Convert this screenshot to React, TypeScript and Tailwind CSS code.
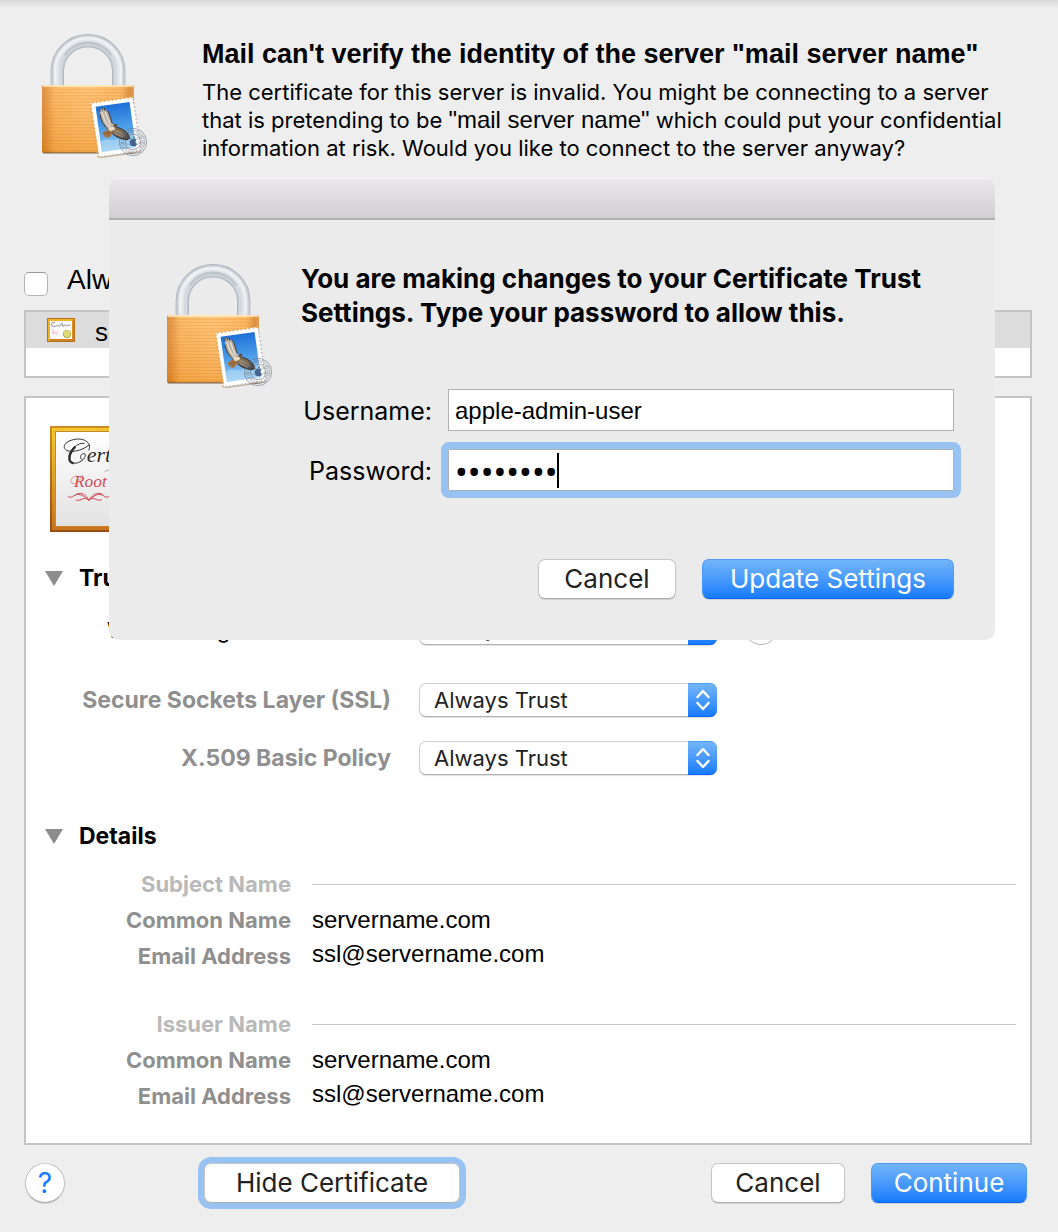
import { useState } from 'react';
import type { ReactNode } from 'react';

const stampHoles = {
    top: Array.from({ length: 11 }, (_, i) => 6 + i * 12),
    side: Array.from({ length: 14 }, (_, i) => 6 + i * 12),
};

function LockIcon() {
    return (
        <svg viewBox="60 36 330 378" className="w-[110px] h-[126px] shrink-0" aria-hidden="true">
            <defs>
                <linearGradient id="lockBody" x1="0" x2="1" y1="0" y2="0">
                    <stop offset="0" stopColor="#d8832b" />
                    <stop offset="0.04" stopColor="#e08c34" />
                    <stop offset="0.14" stopColor="#fbb254" />
                    <stop offset="0.5" stopColor="#ffbd66" />
                    <stop offset="0.86" stopColor="#fbb050" />
                    <stop offset="0.96" stopColor="#d98228" />
                    <stop offset="1" stopColor="#e4964a" />
                </linearGradient>
                <linearGradient id="lockShade" x1="0" x2="0" y1="0" y2="1">
                    <stop offset="0" stopColor="#fff" stopOpacity="0.12" />
                    <stop offset="1" stopColor="#d06a00" stopOpacity="0.2" />
                </linearGradient>
                <linearGradient id="sky" x1="0" x2="0" y1="0" y2="1">
                    <stop offset="0" stopColor="#1f70d8" />
                    <stop offset="0.5" stopColor="#4b9de9" />
                    <stop offset="1" stopColor="#9bcdf2" />
                </linearGradient>
                <linearGradient id="lowerWing" x1="0" x2="1" y1="0" y2="1">
                    <stop offset="0" stopColor="#8a6f50" />
                    <stop offset="0.5" stopColor="#77695a" />
                    <stop offset="1" stopColor="#3b3835" />
                </linearGradient>
            </defs>
            <path d="M112 200V152a92 90 0 0 1 184 0v48" fill="none" stroke="#a2a9b2" strokeWidth="40" />
            <path d="M112 200V152a92 90 0 0 1 184 0v48" fill="none" stroke="#c3c9d0" strokeWidth="37" />
            <path d="M112 200V152a92 90 0 0 1 184 0v48" fill="none" stroke="#d5dadf" strokeWidth="28" />
            <path d="M109 200V150a95 93 0 0 1 190 0v50" fill="none" stroke="#e3e7eb" strokeWidth="14" />
            <path d="M106 190V150a98 95 0 0 1 196 0v40" fill="none" stroke="#f1f3f5" strokeWidth="6" />
            <path d="M134 106a82 78 0 0 1 140 0" fill="none" stroke="#a4acb6" strokeWidth="8" opacity="0.45" />
            <rect x="68" y="394" width="272" height="8" rx="4" fill="#5b5b5b" opacity="0.45" />
            <rect x="66" y="196" width="276" height="202" rx="4" fill="url(#lockBody)" />
            {Array.from({ length: 20 }, (_, i) => (
                <path key={i} d={`M67 ${208 + i * 9.6}H341`} stroke="#d97d22" strokeWidth="2.4" opacity="0.42" />
            ))}
            <rect x="66" y="196" width="276" height="202" rx="4" fill="url(#lockShade)" />
            <path d="M69 198H339" stroke="#fff0c8" strokeWidth="4" />
            <path d="M68 397H340" stroke="#8a4a12" strokeWidth="3" opacity="0.7" />

            <g transform="translate(212 249) rotate(-8)">
                <rect x="3" y="5" width="126" height="163" fill="#54310c" opacity="0.35" />
                <rect width="128" height="164" fill="#fff" transform="skewX(1)" />
                {stampHoles.top.map((x) => (
                    <g key={x} fill="#e4a861">
                        <circle cx={x} cy="0" r="3" />
                        <circle cx={x + 2} cy="164" r="3" fill="#cfc2b2" />
                    </g>
                ))}
                {stampHoles.side.map((y) => (
                    <g key={y} fill="#e4a861">
                        <circle cx="0" cy={y} r="3" />
                        <circle cx="129" cy={y} r="3" fill="#cbc5be" />
                    </g>
                ))}
                <rect x="13" y="13" width="103" height="137" fill="url(#sky)" />
                <path d="M13 120c22-14 40 8 60-4s30-10 43-8v42H13z" fill="#c4e2f6" opacity="0.45" />
            </g>

            {/* upper wing */}
            <path d="M236 266l6 3 2-7 5 5 5-3 3 7 5 0c9 13 11 27 15 39l7 11-16 11c-12-8-19-19-24-33-3-9-5-18-4-26z" fill="#b9b0a4" />
            <path d="M246 276c4 19 11 33 24 46M256 276c4 14 8 26 17 40" fill="none" stroke="#e4dccf" strokeWidth="4" />
            <path d="M240 284c3 18 13 36 26 46M262 271c8 12 10 27 15 40M236 266l6 8M245 262l3 8M253 264l2 8" fill="none" stroke="#3a332d" strokeWidth="3" />
            {/* lower wing */}
            <path d="M272 330l16-9c15 3 28 10 34 18 5 6 8 12 9 18l-10 2c-16-1-29-5-38-13l-13-8z" fill="url(#lowerWing)" />
            <path d="M284 332c12 2 22 8 30 17M282 338c10 4 18 9 27 13" fill="none" stroke="#b8a588" strokeWidth="3" />
            <path d="M278 341c13 12 29 18 46 18M290 322c16 3 30 12 38 28" fill="none" stroke="#2f2a26" strokeWidth="3" />
            {/* tail and head */}
            <path d="M246 342c7-9 15-13 24-14l8 10c-3 8-8 13-14 17l-6-5-5 1-1-5z" fill="#a5774a" />
            <path d="M254 341l17-6M260 348l12-10" stroke="#6d4a2a" strokeWidth="2" />
            <path d="M264 324c8-4 14-4 22-2l-3 8-13 4z" fill="#e9dcc6" />
            <path d="M280 320l3-7c4-3 8-1 10 2l-3 2-3 7z" fill="#6b4c2e" />

            <g fill="none" stroke="#5f6b7c" opacity="0.55">
                <circle cx="339" cy="366" r="41" strokeWidth="3" />
                <circle cx="339" cy="366" r="35" strokeWidth="2" />
                <circle cx="339" cy="366" r="23" strokeWidth="3" />
                <circle cx="339" cy="366" r="29" strokeWidth="6" strokeDasharray="3 5" />
                <path d="M301 352c22-8 30 10 52 2s16-4 24-3M299 372c20-8 30 10 50 2s20-4 28-2M303 386c18-8 28 8 46 0" strokeWidth="2" />
            </g>
            <path
                d="M340 358c4-3 8-2 10 1-5 4-4 10 1 12-2 7-6 9-11 7-6 2-11-4-11-12 1-8 7-10 11-8zM339 355c0-4 3-7 6-7 0 4-3 7-6 7z"
                fill="#34527b"
                opacity="0.85"
            />
        </svg>
    );
}

function SmallCertificateIcon() {
    return (
        <svg viewBox="0 0 84 72" className="w-7 h-6 shrink-0" aria-hidden="true">
            <rect width="84" height="72" fill="#b9711c" />
            <rect x="3" y="3" width="78" height="66" fill="#eeb429" />
            <path d="M3 69l8-6h65V10l5-7v66z" fill="#cd7f22" />
            <rect x="9" y="9" width="66" height="54" fill="#fafafa" />
            <path d="M24 15c-8-5-14 3-9 8s10 1 13 0 3 4 6 0 3 4 6 0 3-8 6-6-3 8 2 8 4-6 7-4 3 5 6 1 4 2 9 0" fill="none" stroke="#555" strokeWidth="2" />
            <path d="M13 37c8-8 11 2 3 6 9-2 8 4 18-5M15 48c9-7 10 5 20-1" fill="none" stroke="#f0a3a7" strokeWidth="2" />
            <circle cx="60" cy="48" r="12" fill="#9fa23f" />
            <circle cx="60" cy="47" r="10" fill="#dfdc77" />
        </svg>
    );
}

function CertificateIcon() {
    return (
        <svg viewBox="0 0 420 318" className="w-[140px] h-[106px]" aria-hidden="true">
            <defs>
                <linearGradient id="frame" x1="0" x2="0" y1="0" y2="1">
                    <stop offset="0" stopColor="#f2c72e" />
                    <stop offset="0.5" stopColor="#dda028" />
                    <stop offset="1" stopColor="#c8751d" />
                </linearGradient>
                <linearGradient id="frameEdge" x1="0" x2="0" y1="0" y2="1">
                    <stop offset="0" stopColor="#d08a20" />
                    <stop offset="1" stopColor="#9a4c12" />
                </linearGradient>
                <linearGradient id="paper" x1="0" x2="0" y1="0" y2="1">
                    <stop offset="0" stopColor="#fff" />
                    <stop offset="1" stopColor="#e2e2e2" />
                </linearGradient>
            </defs>
            <rect width="420" height="318" fill="url(#frameEdge)" />
            <rect x="6" y="6" width="408" height="306" fill="url(#frame)" />
            <rect x="15" y="15" width="390" height="286" fill="#c58a2c" />
            <rect x="18" y="18" width="384" height="282" fill="url(#paper)" />
            <path
                d="M116 73C128 47 96 34 70 41 42 47 36 66 50 73c20 9 55-4 68-17M104 52C82 49 58 72 57 92c0 23 25 26 43 8 8-9 8-18 0-17-10 1-11 15-3 18"
                fill="none"
                stroke="#333"
                strokeWidth="3"
            />
            <path d="M76 62c-20 20-25 46-5 50" fill="none" stroke="#2b2b2b" strokeWidth="7" />
            <text x="110" y="109" fontFamily="Liberation Serif, serif" fontStyle="italic" fontSize="66" fill="#2b2b2b">
                ertificate
            </text>
            <path d="M163 138c10-8 22-8 40-6" fill="none" stroke="#888" strokeWidth="2" />
            <path d="M82 150c-22 2-25 22-10 23 12 0 20-16 26-26" fill="none" stroke="#d8656b" strokeWidth="2" />
            <text x="72" y="182" fontFamily="Liberation Serif, serif" fontStyle="italic" fontSize="52" fill="#cf4a52">
                Root
            </text>
            <path
                d="M54 211c12 10 21-9 36-9 15 1 20 10 27 20 9-13 18-21 32-20 12 1 13 17 28 10M75 207c15-6 27 4 42 16 15-15 28-22 40-15M78 222c15 6 24-14 39 1 12-15 24 5 38-2"
                fill="none"
                stroke="#cf4a52"
                strokeWidth="3"
            />
        </svg>
    );
}

function Triangle() {
    return (
        <svg viewBox="0 0 18 15" className="w-[18px] h-[15px] shrink-0" aria-hidden="true">
            <path d="M0 0H18L9 15z" fill="#8c8c8c" />
        </svg>
    );
}

function Button({ primary, className, children }: { primary?: boolean; className: string; children: ReactNode }) {
    const look = primary
        ? 'text-white bg-linear-to-b from-[#72b5f8] to-[#147bfe] border-[#4c9bf6] border-b-[#0a62fb]'
        : 'text-[#222] bg-white border-[#c6c6c6] border-b-[#adadad]';
    return (
        <button type="button" className={`h-10 rounded-[7px] border text-[26px] leading-8 shadow-[0_1px_1px_rgba(0,0,0,0.12)] ${look} ${className}`}>
            {children}
        </button>
    );
}

function PolicySelect({ id, label, dark }: { id: string; label: string; dark?: boolean }) {
    return (
        <div className="flex items-center gap-7">
            <label htmlFor={id} className={dark ? 'w-[341px] pt-1 text-right text-black' : 'w-[341px] text-right text-[23px] font-bold text-[#8f8f8f]'}>
                {label}
            </label>
            <div className="relative w-[298px]">
                <select
                    id={id}
                    className="block w-full h-[34px] appearance-none rounded-[7px] border border-[#cfcfcf] border-b-[#b0b0b0] bg-white pl-[14px] text-[#222] shadow-[0_1px_1px_rgba(0,0,0,0.12)]"
                >
                    <option>Always Trust</option>
                </select>
                <span className="pointer-events-none absolute inset-y-0 right-0 flex w-[29px] items-center justify-center rounded-r-[7px] border-y border-t-[#4c9bf6] border-b-[#0a62fb] bg-linear-to-b from-[#72b5f8] to-[#147bfe]">
                    <svg viewBox="0 0 14 22" className="w-[14px] h-[22px]" fill="none" stroke="#fff" strokeWidth="2.4" strokeLinecap="round" strokeLinejoin="round">
                        <path d="M1.5 8L7 2l5.500 6M1.500 14L7 20l5.500-6" />
                    </svg>
                </span>
            </div>
        </div>
    );
}

function NameGroup({ title }: { title: string }) {
    return (
        <dl className="grid grid-cols-[241px_1fr] gap-x-[21px] leading-9">
            <dt className="text-right font-bold text-[#b9b9b9]">{title}</dt>
            <dd className="h-px self-center bg-[#c8c8c8]" />
            <dt className="text-right font-bold text-[#8f8f8f]">Common Name</dt>
            <dd className="font-['Liberation_Sans',sans-serif] text-2xl leading-9">servername.com</dd>
            <dt className="text-right font-bold text-[#8f8f8f]">Email Address</dt>
            <dd className="font-['Liberation_Sans',sans-serif] text-2xl leading-8">ssl@servername.com</dd>
        </dl>
    );
}

function PasswordDialog() {
    const [username, setUsername] = useState('apple-admin-user');
    const [password, setPassword] = useState('password');

    return (
        <section role="dialog" aria-labelledby="dialog-title" className="absolute top-[178px] left-[109px] right-[63px] z-10 overflow-hidden rounded-[10px] bg-[#ebebeb]">
            <div className="h-[42px] border-t border-b-2 border-t-[#f6f5f6] border-b-[#b1b0b1] bg-linear-to-b from-[#e9e7ea] to-[#d1cfd2]" />
            <div className="flex gap-[26px] pt-[42px] pr-[41px] pb-[41px] pl-14">
                <LockIcon />
                <div className="min-w-0 flex-1">
                    <h2 id="dialog-title" className="text-[26px] leading-[34px] font-bold">
                        You are making changes to your Certificate Trust
                        <br />
                        Settings. Type your password to allow this.
                    </h2>
                    <form className="mt-[59px]" onSubmit={(e) => e.preventDefault()}>
                        <div className="grid grid-cols-[131px_1fr] items-center gap-x-4 gap-y-[18px]">
                            <label htmlFor="username" className="pt-[2px] text-right text-[25px] leading-8">Username:</label>
                            <input
                                id="username"
                                type="text"
                                className="h-[42px] w-full border border-[#b1b1b1] bg-white px-[6px] pt-[2px] font-['Liberation_Sans',sans-serif] text-2xl outline-none"
                                value={username}
                                onChange={(e) => setUsername(e.target.value)}
                            />
                            <label htmlFor="password" className="pt-[2px] text-right text-[25px] leading-8">Password:</label>
                            <div className="relative">
                                <input
                                    id="password"
                                    type="password"
                                    className="block h-[42px] w-full border border-[#a9b1ba] bg-white px-[6px] pt-[6px] font-[Roboto,sans-serif] text-[38px] caret-transparent outline-[7px] outline-[#98c2f2] rounded-[1px]"
                                    value={password}
                                    onChange={(e) => setPassword(e.target.value)}
                                />
                                <span className="absolute top-1 left-[109px] h-[35px] w-[2px] bg-black" />
                            </div>
                        </div>
                        <div className="mt-[68px] flex justify-end gap-[26px]">
                            <Button className="w-[138px]">Cancel</Button>
                            <Button primary className="w-[252px]">Update Settings</Button>
                        </div>
                    </form>
                </div>
            </div>
        </section>
    );
}

export default function App() {
    return (
        <div className="relative min-h-screen bg-[#eee] pb-6 font-[Inter,sans-serif] text-[22px] leading-7 text-black">
            <div className="h-2 bg-linear-to-b from-[#d9d9d9] to-[#eee]" />
            <header className="flex gap-[52px] pt-6 pl-10 pr-6">
                <LockIcon />
                <div className="pt-1">
                    <h1 className="font-['Liberation_Sans',sans-serif] text-[27px] leading-9 font-bold">Mail can't verify the identity of the server "mail server name"</h1>
                    <p className="pt-[6px]">
                        The certificate for this server is invalid. You might be connecting to a server
                        <br />
                        that is pretending to be <span className="font-['Liberation_Sans',sans-serif] text-2xl leading-7">"mail server name"</span> which could put your confidential
                        <br />
                        information at risk. Would you like to connect to the server anyway?
                    </p>
                </div>
            </header>

            <main className="pt-[100px] pr-[26px] pl-6">
                <div className="flex h-9 items-center gap-[19px]">
                    <input
                        id="always-trust"
                        type="checkbox"
                        className="mt-2 size-6 appearance-none rounded-[5px] border border-[#b5b5b5] border-t-[#999] bg-white"
                    />
                    <label htmlFor="always-trust" className="font-['Liberation_Sans',sans-serif] text-[28px] leading-9">Always trust</label>
                </div>

                <div className="mt-3 h-[68px] border-2 border-[#c4c4c4] bg-white">
                    <div className="flex h-9 items-center gap-5 bg-[#dcdcdc] pl-[21px]">
                        <SmallCertificateIcon />
                        <span className="pt-1 font-['Liberation_Sans',sans-serif] text-[26px]">servername.com</span>
                    </div>
                </div>

                <div className="mt-[18px] border-2 border-[#c4c4c4] bg-white pt-7 pr-[14px] pb-[29px] pl-6">
                    <CertificateIcon />
                    <h3 className="-ml-[5px] mt-8 flex items-center gap-4 text-[23px] font-bold">
                        <Triangle />
                        Trust
                    </h3>
                    <div className="mt-[19px]">
                        <div className="flex items-center gap-[27px]">
                            <PolicySelect id="when-using" label="When using this certificate:" dark />
                            <button type="button" aria-label="Trust help" className="size-[34px] rounded-full border border-[#b5b5b5] bg-white text-2xl text-[#147bfe]">?</button>
                        </div>
                        <div className="mt-[38px] space-y-6">
                            <PolicySelect id="ssl" label="Secure Sockets Layer (SSL)" />
                            <PolicySelect id="x509" label="X.509 Basic Policy" />
                        </div>
                    </div>
                    <h3 className="-ml-[5px] mt-[47px] mb-4 flex items-center gap-4 text-[23px] font-bold">
                        <Triangle />
                        Details
                    </h3>
                    <NameGroup title="Subject Name" />
                    <div className="mt-8">
                        <NameGroup title="Issuer Name" />
                    </div>
                </div>
            </main>

            <footer className="flex items-center pt-[18px] pr-[31px] pl-[25px]">
                <button type="button" aria-label="Help" className="size-10 rounded-full border border-[#c6c6c6] border-b-[#adadad] bg-white text-[28px] text-[#147bfe] shadow-[0_1px_1px_rgba(0,0,0,0.12)]">
                    ?
                </button>
                <Button className="ml-[139px] w-[256px] outline-[6px] outline-[#98c2f2]">Hide Certificate</Button>
                <div className="ml-auto flex gap-[26px]">
                    <Button className="w-[134px]">Cancel</Button>
                    <Button primary className="w-[156px]">Continue</Button>
                </div>
            </footer>

            <PasswordDialog />
        </div>
    );
}
